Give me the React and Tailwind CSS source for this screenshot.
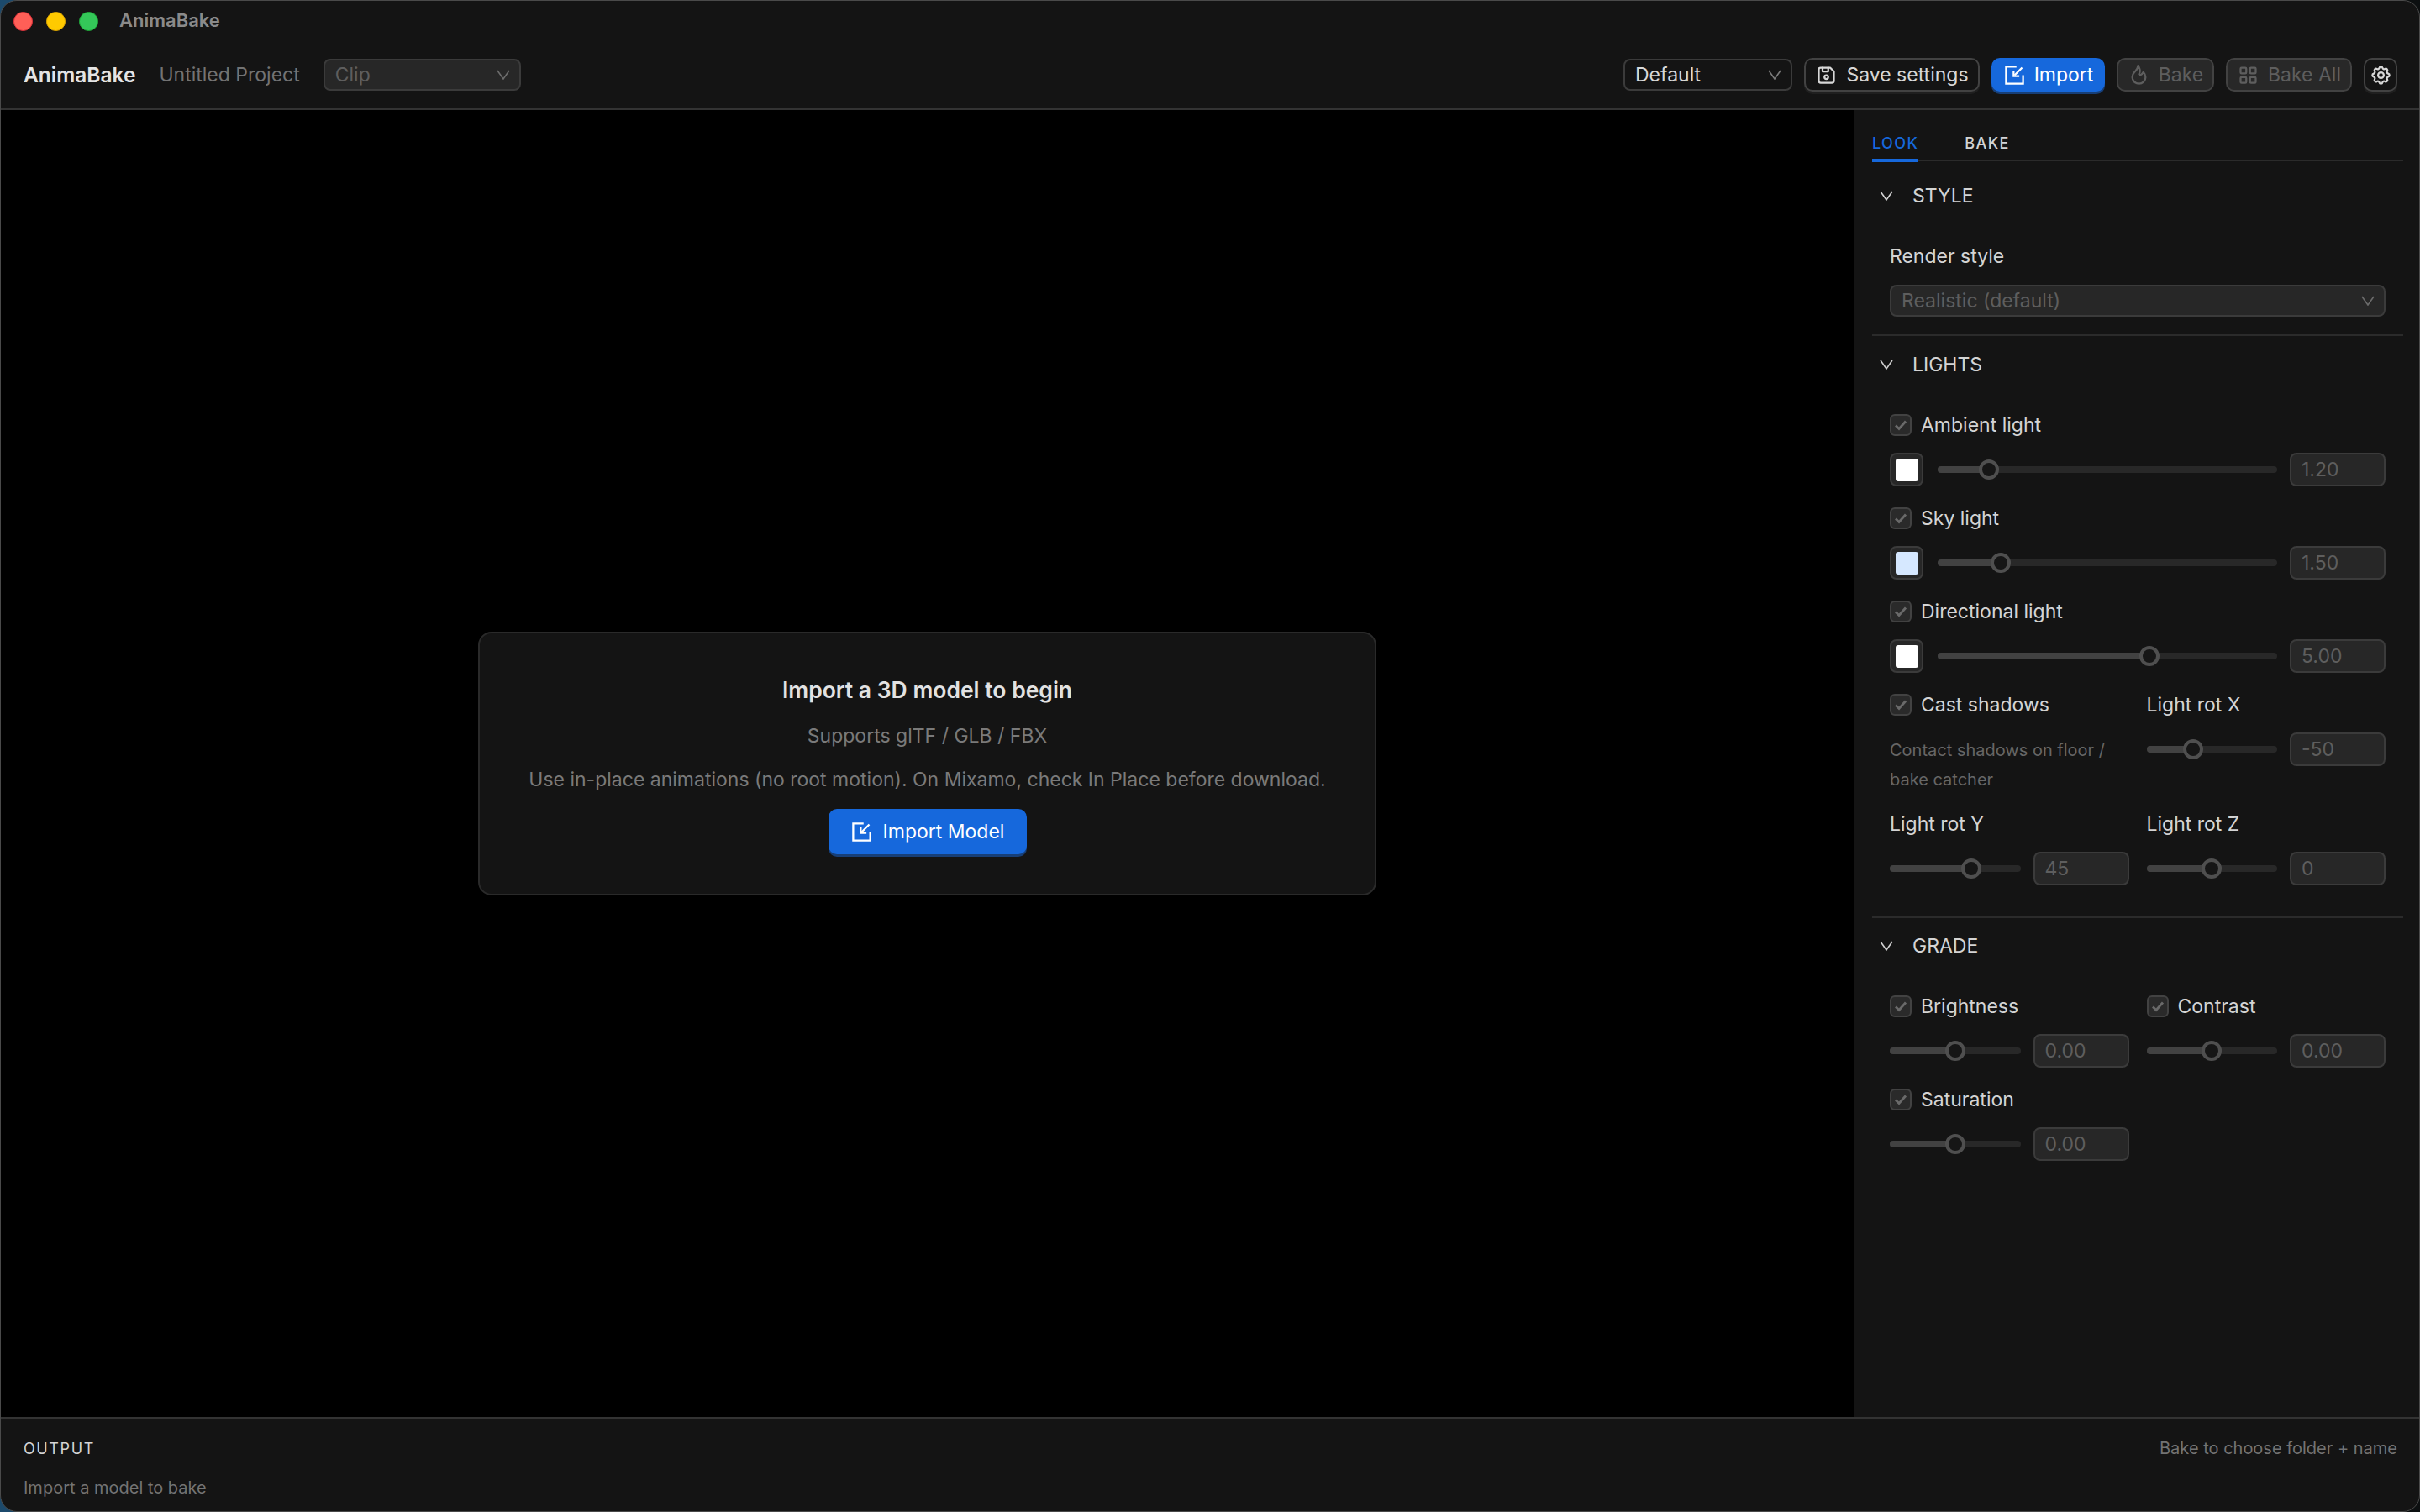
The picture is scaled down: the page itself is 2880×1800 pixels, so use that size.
import React from "react";
import { TbDeviceFloppy, TbFlame, TbLayoutGrid, TbSettings } from "react-icons/tb";

const font = "font-['Inter','Noto_Sans',sans-serif]";

// Square with a notch in the top right corner and an arrow going in.
const ImportIcon = ({ className }) => (
    <svg viewBox="0 0 24 24" fill="none" stroke="currentColor" strokeWidth="2" className={className}>
        <path d="M14 3H3v18h18v-9" />
        <path d="M20 4l-8 8" />
        <path d="M11 7v6h6" />
    </svg>
);

const Chevron = ({ className }) => (
    <svg viewBox="0 0 16 12" fill="none" stroke="currentColor" strokeWidth="1.6" className={className}>
        <path d="M1 1l7 10 7-10" />
    </svg>
);

const Select = ({ label, disabled, className }) => (
    <div className={`flex h-[38px] items-center justify-between rounded-lg border-2 pl-[12px] pr-[11px] text-[23px] ${disabled ? "border-[#3b3b3b] bg-[#272727] text-[#5e5e5e]" : "border-[#3b3b3b] bg-[#141414] text-[#d8d8d8]"} ${className}`}>
        <span>{label}</span>
        <Chevron className={`h-[12px] w-[16px] ${disabled ? "text-[#6b6b6b]" : "text-[#7a7a7a]"}`} />
    </div>
);

const ToolButton = ({ icon: Icon, label, variant, className }) => {
    const styles = {
        normal: "border-[#424242] bg-[#141414] text-[#d8d8d8] shadow-[0_3px_0_#1f1f1f]",
        primary: "border-[#1668dc] bg-[#1668dc] text-white shadow-[0_3px_0_#173f78]",
        disabled: "border-[#424242] bg-[#282828] text-[#5e5e5e]",
    };
    return (
        <div className={`flex h-[40px] items-center justify-center gap-[10px] rounded-[10px] border-2 text-[23px] ${styles[variant]} ${className}`}>
            <Icon className="h-[27px] w-[27px] shrink-0" />
            {label && <span>{label}</span>}
        </div>
    );
};

const CheckRow = ({ label }) => (
    <div className="flex h-[26px] items-center gap-[11px]">
        <div className="flex h-[26px] w-[26px] items-center justify-center rounded-md border-2 border-[#424242] bg-[#2a2a2a]">
            <svg viewBox="0 0 16 16" fill="none" stroke="#6a6a6a" strokeWidth="2.8" className="h-[16px] w-[16px]">
                <path d="M2 8.5l4 4 8-9" />
            </svg>
        </div>
        <span className="text-[23px] text-[#d4d4d4]">{label}</span>
    </div>
);

const Slider = ({ percent }) => (
    <div className="relative h-[8px] min-w-0 flex-1 rounded-full bg-[#282828]">
        <div className="h-full rounded-full bg-[#424242]" style={{ width: `${percent}%` }} />
        <div
            className="absolute top-1/2 h-[24px] w-[24px] -translate-x-1/2 -translate-y-1/2 rounded-full border-4 border-[#4f4f4f] bg-[#161616]"
            style={{ left: `${percent}%` }}
        />
    </div>
);

const NumberBox = ({ value }) => (
    <div className="flex h-[40px] w-[114px] shrink-0 items-center rounded-lg border-2 border-[#3b3b3b] bg-[#272727] pl-[12px] text-[23px] text-[#5e5e5e]">
        {value}
    </div>
);

const SliderRow = ({ percent, value, swatch }) => (
    <div className="flex h-[40px] items-center gap-[15px]">
        {swatch && (
            <div className="mr-[2px] flex h-[40px] w-[40px] shrink-0 items-center justify-center rounded-lg border-2 border-[#3b3b3b] bg-[#272727]">
                <div className={`h-[27px] w-[27px] rounded-[3px] ${swatch}`} />
            </div>
        )}
        <Slider percent={percent} />
        <NumberBox value={value} />
    </div>
);

const SectionHeader = ({ title }) => (
    <div className="flex h-[66px] items-center gap-[23px] pl-[9px]">
        <Chevron className="h-[12px] w-[16px] text-[#d0d0d0]" />
        <span className="text-[23px] text-[#d4d4d4]">{title}</span>
    </div>
);

const LightItem = ({ label, percent, value, swatch }) => (
    <div className="flex flex-col gap-[20px]">
        <CheckRow label={label} />
        <SliderRow percent={percent} value={value} swatch={swatch} />
    </div>
);

const PlainLabel = ({ children }) => (
    <div className="flex h-[26px] items-center text-[23px] text-[#d4d4d4]">{children}</div>
);

const Sidebar = () => (
    <aside className="flex w-[673px] shrink-0 flex-col border-l border-[#333333] bg-[#141414] pl-[21px] pr-[19px]">
        <div className="flex items-end gap-[55px] border-b-2 border-[#2b2b2b] pt-[20px]">
            <div className="-mb-[3px] flex h-[42px] items-center border-b-4 border-[#1668dc] text-[18px] font-medium tracking-[1.4px] text-[#1668dc]">LOOK</div>
            <div className="flex h-[39px] items-center text-[18px] font-medium tracking-[1.4px] text-[#d4d4d4]">BAKE</div>
        </div>

        <section className="mt-[8px] border-b-2 border-[#2b2b2b]">
            <SectionHeader title="STYLE" />
            <div className="flex flex-col gap-[16px] px-[21px] pb-[21px] pt-[21px]">
                <div className="flex h-[36px] items-center text-[23px] text-[#d4d4d4]">Render style</div>
                <Select label="Realistic (default)" disabled className="w-full" />
            </div>
        </section>

        <section className="mt-[1px] border-b-2 border-[#2b2b2b]">
            <SectionHeader title="LIGHTS" />
            <div className="flex flex-col gap-[25px] px-[21px] pb-[37px] pt-[26px]">
                <LightItem label="Ambient light" percent={15} value="1.20" swatch="bg-white" />
                <LightItem label="Sky light" percent={18.5} value="1.50" swatch="bg-[#d6e8ff]" />
                <LightItem label="Directional light" percent={62.4} value="5.00" swatch="bg-white" />
                <div className="grid grid-cols-2 gap-x-[21px] gap-y-[22px]">
                    <div className="flex flex-col">
                        <CheckRow label="Cast shadows" />
                        <p className="mt-[24px] text-[20px] leading-[35px] text-[#666666]">Contact shadows on floor / bake catcher</p>
                    </div>
                    <div className="flex flex-col gap-[20px]">
                        <PlainLabel>Light rot X</PlainLabel>
                        <SliderRow percent={36} value="-50" />
                    </div>
                    <div className="flex flex-col gap-[20px]">
                        <PlainLabel>Light rot Y</PlainLabel>
                        <SliderRow percent={62.5} value="45" />
                    </div>
                    <div className="flex flex-col gap-[20px]">
                        <PlainLabel>Light rot Z</PlainLabel>
                        <SliderRow percent={50} value="0" />
                    </div>
                </div>
            </div>
        </section>

        <section>
            <SectionHeader title="GRADE" />
            <div className="grid grid-cols-2 gap-x-[21px] gap-y-[25px] px-[21px] pt-[26px]">
                <LightItem label="Brightness" percent={50} value="0.00" />
                <LightItem label="Contrast" percent={50} value="0.00" />
                <LightItem label="Saturation" percent={50} value="0.00" />
            </div>
        </section>
    </aside>
);

const ImportCard = () => (
    <div className="flex h-[314px] w-[1069px] flex-col items-center rounded-2xl border-2 border-[#2a2a2a] bg-[#141414]">
        <h2 className="mt-[47px] text-[26.5px] font-semibold leading-[40px] text-[#e2e2e2]">Import a 3D model to begin</h2>
        <p className="mt-[17px] text-[23px] leading-[36px] text-[#7a7a7a]">Supports glTF / GLB / FBX</p>
        <p className="mt-[16px] text-[23px] leading-[36px] text-[#7a7a7a]">Use in-place animations (no root motion). On Mixamo, check In Place before download.</p>
        <div className="mt-[17px] flex h-[54px] w-[236px] items-center justify-center gap-[12px] rounded-[10px] bg-[#1668dc] text-[23px] text-white shadow-[0_3px_0_#173f78]">
            <ImportIcon className="h-[27px] w-[27px]" />
            <span>Import Model</span>
        </div>
    </div>
);

export default function App() {
    return (
        <div className={`h-[1800px] w-[2880px] bg-gradient-to-r from-[#1c4a6c] via-[#0d1a20] to-[#0c0f10] antialiased ${font}`}>
            <div className="flex h-full flex-col overflow-hidden rounded-[20px] border border-[#4a4a4a] bg-[#141414]">
                <div className="flex h-[48px] shrink-0 items-center pl-[15px]">
                    <div className="flex gap-[16px]">
                        <div className="h-[23px] w-[23px] rounded-full border border-[#e0323c] bg-[#ff5f57]" />
                        <div className="h-[23px] w-[23px] rounded-full border border-[#e0a800] bg-[#ffca00]" />
                        <div className="h-[23px] w-[23px] rounded-full border border-[#1fa83a] bg-[#34c759]" />
                    </div>
                    <span className="mb-[2px] ml-[25px] text-[22px] font-semibold text-[#8a8a8a]">AnimaBake</span>
                </div>

                <header className="flex h-[82px] shrink-0 items-center justify-between border-b-2 border-[#333333] pl-[27px] pr-[26px]">
                    <div className="flex items-center">
                        <span className="text-[24.5px] font-semibold text-[#e4e4e4]">AnimaBake</span>
                        <span className="ml-[28px] text-[23px] text-[#737373]">Untitled Project</span>
                        <Select label="Clip" disabled className="ml-[28px] w-[235px]" />
                    </div>
                    <div className="flex items-center gap-[14px]">
                        <Select label="Default" className="w-[201px]" />
                        <ToolButton icon={TbDeviceFloppy} label="Save settings" variant="normal" className="w-[209px]" />
                        <ToolButton icon={ImportIcon} label="Import" variant="primary" className="w-[135px]" />
                        <ToolButton icon={TbFlame} label="Bake" variant="disabled" className="w-[116px]" />
                        <ToolButton icon={TbLayoutGrid} label="Bake All" variant="disabled" className="w-[150px]" />
                        <ToolButton icon={TbSettings} variant="normal" className="w-[40px]" />
                    </div>
                </header>

                <div className="flex min-h-0 flex-1">
                    <main className="flex min-w-0 flex-1 items-center justify-center bg-black">
                        <ImportCard />
                    </main>
                    <Sidebar />
                </div>

                <footer className="flex h-[112px] shrink-0 flex-col border-t-2 border-[#333333] pl-[27px] pr-[26px] pt-[20px]">
                    <div className="flex items-center justify-between">
                        <span className="text-[18px] tracking-[1.6px] text-[#d4d4d4]">OUTPUT</span>
                        <span className="text-[20px] text-[#737373]">Bake to choose folder + name</span>
                    </div>
                    <span className="mt-[17px] text-[20px] text-[#737373]">Import a model to bake</span>
                </footer>
            </div>
        </div>
    );
}
